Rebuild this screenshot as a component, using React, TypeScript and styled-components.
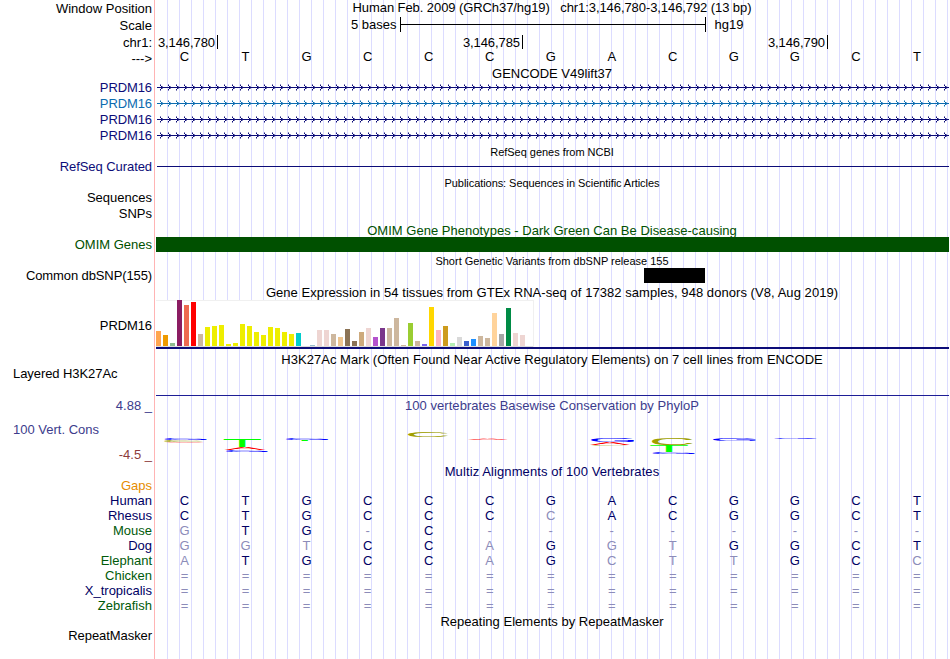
import React from "react";
import styled, { createGlobalStyle } from "styled-components";

const GlobalStyle = createGlobalStyle`
  body { margin: 0; background: #fff; }
`;

const NAVY = "#0c0c78";
const GREEN = "#005000";

const Browser = styled.main`
  width: 949px;
  height: 659px;
  overflow: hidden;
  color: #000;
  font: 13px/15px "Liberation Sans", Arial, sans-serif;
  white-space: pre;
  background:
    linear-gradient(#ffb4b4, #ffb4b4) 154px 0 / 1px 100% no-repeat,
    repeating-linear-gradient(to right, #dcdcff 0 1px, transparent 1px 12px) 167px 0 / 782px 100% no-repeat;
`;

const Row = styled.div<{ $h: number; $top?: number }>`
  display: grid;
  grid-template-columns: 155px 794px;
  height: ${(p) => p.$h}px;
  margin-top: ${(p) => p.$top ?? 0}px;
`;

const Label = styled.div<{ $color?: string; $left?: boolean; $dy?: number; $ls?: number }>`
  box-sizing: border-box;
  margin-top: ${(p) => p.$dy ?? 0}px;
  padding: 0 3px 0 13px;
  text-align: ${(p) => (p.$left ? "left" : "right")};
  color: ${(p) => p.$color ?? "#000"};
  letter-spacing: ${(p) => p.$ls ?? 0}px;
`;

const Track = styled.div`
  min-width: 0;
  padding-top: 8px;
`;

const Title = styled.div<{ $color?: string; $small?: boolean; $ls?: number }>`
  text-align: center;
  color: ${(p) => p.$color ?? "#000"};
  font-size: ${(p) => (p.$small ? 11 : 13)}px;
  letter-spacing: ${(p) => p.$ls ?? 0}px;
`;

const ScaleTrack = styled.div`
  display: flex;
  align-items: center;
  height: 15px;
  padding-left: 196px;
`;

const ScaleBar = styled.div`
  width: 304px;
  height: 15px;
  margin: 0 9px 0 3px;
  border: solid #000;
  border-width: 0 1px;
  background: linear-gradient(#000, #000) 0 7px / 100% 1px no-repeat;
`;

const Ticks = styled.div`
  display: grid;
  grid-template-columns: 63px 305px 305px;
`;

const Tick = styled.div`
  height: 14px;
  padding-right: 2px;
  border-right: 1px solid #000;
  box-sizing: border-box;
  text-align: right;
  letter-spacing: -0.08px;
`;

const Bases = styled.div`
  display: grid;
  grid-template-columns: repeat(13, 61.04px);
  margin-left: -1px;
  text-align: center;
`;

const Base = styled.span<{ $color: string }>`
  color: ${(p) => p.$color};
`;

const Block = styled.div<{ $x: number; $w: number; $h: number; $color: string; $dy?: number }>`
  width: ${(p) => p.$w}px;
  height: ${(p) => p.$h}px;
  margin: ${(p) => p.$dy ?? 0}px 0 0 ${(p) => p.$x}px;
  background: ${(p) => p.$color};
`;

const Drawing = styled.svg`
  display: block;
`;

const Expression = styled.div`
  height: 49px;
  margin-left: 1px;
  box-sizing: border-box;
  border-bottom: 2px solid ${NAVY};
`;

const Chart = styled.div`
  display: flex;
  align-items: flex-end;
  gap: 2px;
  box-sizing: border-box;
  width: 378px;
  height: 47px;
  background: #fff;
  box-shadow: inset 0 1px #f0f0f0, inset -1px 0 #f0f0f0, inset 0 -1px #dcdcdc;
  padding-bottom: 1px;
`;

const Bar = styled.div<{ $h: number; $color: string }>`
  width: 5px;
  height: ${(p) => p.$h}px;
  background: ${(p) => p.$color};
`;

const Y = "#eeee00";
const TAN = "#cdb79e";
const PINK = "#eed5d2";
const tissues: [number, string][] = [
  [15, "#ffa54f"], [11, "#ee9a00"], [3, "#8fbc8f"], [46, "#8b1c62"], [41, "#ee6a50"], [44, "#ff0000"],
  [12, TAN], [19, Y], [20, Y], [21, Y], [2, Y], [3, Y], [22, Y], [20, Y], [14, Y], [11, Y], [19, Y],
  [18, Y], [14, Y], [12, Y], [13, "#00cdcd"], [0, "#ee82ee"], [1, "#9ac0cd"], [16, PINK], [16, PINK],
  [12, TAN], [9, "#eec591"], [17, "#8b7355"], [5, "#8b7355"], [14, "#cdaa7d"], [18, PINK],
  [9, "#b452cd"], [18, "#7a378b"], [18, TAN], [28, TAN], [1, TAN], [23, "#9acd32"], [5, TAN],
  [2, "#7a67ee"], [39, "#ffd700"], [16, "#ffb6c1"], [20, "#cd9b1d"], [3, "#b4eeb4"], [9, "#d9d9d9"],
  [5, "#3a5fcd"], [7, "#1e90ff"], [10, TAN], [8, TAN], [33, "#ffd39b"], [12, "#a6a6a6"],
  [38, "#008b45"], [13, PINK], [11, PINK], [0, "#ff00ff"],
];

/* Ink box of each letter at 100 units: left bearing, width, height. */
const ink: Record<string, [number, number, number]> = {
  A: [0.5, 66, 69], C: [5, 64, 71], G: [5, 66, 71], T: [2, 56.5, 69],
};
const logoColor: Record<string, string> = { A: "#ff0000", C: "#a0a000", G: "#0000ff", T: "#00ff00" };

/* letter, x, width, top, bottom in track coordinates */
const logos: [string, number, number, number, number][] = [
  ["G", 9.5, 42.5, 1, 3], ["C", 9, 40, 3, 5], ["A", 10, 40, 4.8, 5.5],
  ["T", 68.5, 37, 2, 10], ["A", 69.5, 41, 10, 13], ["G", 71, 42, 12.8, 14.8],
  ["G", 131, 42.5, 1, 3], ["T", 131, 37, 3, 4],
  ["C", 253, 40.5, -5, 0],
  ["A", 313, 40, 1.4, 3],
  ["G", 436, 43, 1, 5], ["A", 435, 40, 5, 8], ["C", 435, 40, 8, 8.7],
  ["C", 497, 41, 1, 8.2], ["T", 495, 37.5, 8, 15], ["G", 497.5, 42.5, 15, 17],
  ["G", 558, 43, 1, 4],
  ["G", 619.5, 42.5, 1, 2],
];

const LogoPlot = () => (
  <Drawing width="794" height="30" viewBox="0 -7 794 30">
    {logos.map(([c, x, w, top, bottom], i) => {
      const [l, iw, ih] = ink[c];
      return (
        <text
          key={i}
          x={-l}
          fontSize="100"
          fontFamily="Liberation Sans, Arial, sans-serif"
          textRendering="geometricPrecision"
          fill={logoColor[c]}
          transform={`translate(${x} ${bottom}) scale(${w / iw} ${(bottom - top) / ih})`}
        >
          {c}
        </text>
      );
    })}
  </Drawing>
);

/* A gene body with strand arrows every eight pixels. */
const Gene = ({ color, id }: { color: string; id: string }) => (
  <Drawing width="794" height="16" shapeRendering="crispEdges">
    <defs>
      <pattern id={id} x="5" width="8" height="16" patternUnits="userSpaceOnUse">
        <g fill={color}>
          <rect x="2" y="7" width="1" height="1" />
          <rect x="1" y="6" width="1" height="1" />
          <rect x="1" y="8" width="1" height="1" />
          <rect x="0" y="5" width="1" height="1" />
          <rect x="0" y="9" width="1" height="1" />
        </g>
        <g fill={color} opacity=".5">
          <rect x="2" y="6" width="1" height="1" />
          <rect x="2" y="8" width="1" height="1" />
          <rect x="0" y="4" width="1" height="1" />
          <rect x="0" y="10" width="1" height="1" />
        </g>
      </pattern>
    </defs>
    <rect x="2" y="7" width="792" height="1" fill={color} />
    <rect x="2" y="0" width="792" height="16" fill={`url(#${id})`} />
  </Drawing>
);

const genes = [NAVY, "#0c6cb0", NAVY, NAVY];

const DARK = "#000064";
const LIGHT = "#8c8cb9";
const LEAF = "#005a0a";

/* Lower-case letters mark bases that differ from the human sequence. */
const species: [string, string, string][] = [
  ["Human", "CTGCCCGACGGCT", DARK],
  ["Rhesus", "CTGCCCcACGGCT", DARK],
  ["Mouse", "gTG-C--------", LEAF],
  ["Dog", "ggtCCaGgtGGCT", DARK],
  ["Elephant", "aTGCCaGcttGCc", LEAF],
  ["Chicken", "=============", LEAF],
  ["X_tropicalis", "=============", DARK],
  ["Zebrafish", "=============", LEAF],
];

const BaseRow = ({ seq, color }: { seq: string; color: string }) => (
  <Bases>
    {seq.split("").map((c, i) => (
      <Base key={i} $color={/[A-Z]/.test(c) ? color : LIGHT}>{c.toUpperCase()}</Base>
    ))}
  </Bases>
);

type TitleRowProps = { h: number; top?: number; color?: string; small?: boolean; ls?: number; text: string };
const TitleRow = ({ h, top, color, small, ls, text }: TitleRowProps) => (
  <Row $h={h} $top={top}>
    <Label />
    <Title $color={color} $small={small} $ls={ls}>{text}</Title>
  </Row>
);

export default function App() {
  return (
    <>
      <GlobalStyle />
      <Browser>
        <Row $h={17}>
          <Label $dy={1}>Window Position</Label>
          <Title $ls={-0.08}>{"Human Feb. 2009 (GRCh37/hg19)   chr1:3,146,780-3,146,792 (13 bp)"}</Title>
        </Row>
        <Row $h={18}>
          <Label $dy={1}>Scale</Label>
          <ScaleTrack>5 bases<ScaleBar />hg19</ScaleTrack>
        </Row>
        <Row $h={14}>
          <Label>chr1:</Label>
          <Ticks><Tick>3,146,780</Tick><Tick>3,146,785</Tick><Tick>3,146,790</Tick></Ticks>
        </Row>
        <Row $h={17}>
          <Label $dy={2}>---&gt;</Label>
          <BaseRow seq="CTGCCCGACGGCT" color="#000" />
        </Row>
        <TitleRow h={14} text="GENCODE V49lift37" />
        {genes.map((c, i) => (
          <Row $h={16} key={i}>
            <Label $color={c} $ls={-0.1}>PRDM16</Label>
            <Gene color={c} id={`strand${i}`} />
          </Row>
        ))}
        <TitleRow h={15} top={1} small ls={-0.03} text="RefSeq genes from NCBI" />
        <Row $h={15}>
          <Label $color={NAVY} $dy={-1} $ls={-0.07}>RefSeq Curated</Label>
          <Block $x={2} $w={792} $h={1} $dy={6} $color={NAVY} />
        </Row>
        <TitleRow h={15} top={1} small ls={-0.06} text="Publications: Sequences in Scientific Articles" />
        <Row $h={16}><Label $dy={-1}>Sequences</Label></Row>
        <Row $h={16}><Label $dy={-1}>SNPs</Label></Row>
        <TitleRow h={14} color={GREEN} ls={0.02} text="OMIM Gene Phenotypes - Dark Green Can Be Disease-causing" />
        <Row $h={15}>
          <Label $color={GREEN}>OMIM Genes</Label>
          <Block $x={1} $w={793} $h={15} $color={GREEN} />
        </Row>
        <TitleRow h={14} top={2} small text="Short Genetic Variants from dbSNP release 155" />
        <Row $h={15}>
          <Label $ls={-0.11}>Common dbSNP(155)</Label>
          <Block $x={489} $w={61} $h={15} $color="#000" />
        </Row>
        <TitleRow h={15} top={2} ls={0.055} text="Gene Expression in 54 tissues from GTEx RNA-seq of 17382 samples, 948 donors (V8, Aug 2019)" />
        <Row $h={49}>
          <Label $dy={18} $ls={-0.1}>PRDM16</Label>
          <Expression>
            <Chart>{tissues.map(([h, c], i) => <Bar key={i} $h={h} $color={c} />)}</Chart>
          </Expression>
        </Row>
        <TitleRow h={14} top={3} ls={0.047} text="H3K27Ac Mark (Often Found Near Active Regulatory Elements) on 7 cell lines from ENCODE" />
        <Row $h={32}>
          <Label $left $ls={-0.07}>Layered H3K27Ac</Label>
          <Block $x={1} $w={793} $h={1} $dy={29} $color="#1e1e96" />
        </Row>
        <Row $h={24}>
          <Label $color="#3c3c8c">4.88 _</Label>
          <Title $color="#3c3c8c" $ls={0.04}>100 vertebrates Basewise Conservation by PhyloP</Title>
        </Row>
        <Row $h={25}>
          <Label $left $color="#3c3c8c">100 Vert. Cons</Label>
          <Track><LogoPlot /></Track>
        </Row>
        <Row $h={17}><Label $color="#8c3c3c">-4.5 _</Label></Row>
        <TitleRow h={14} color={DARK} ls={0.1} text="Multiz Alignments of 100 Vertebrates" />
        <Row $h={15}><Label $color="#e68c00">Gaps</Label></Row>
        {species.map(([name, seq, color]) => (
          <Row $h={15} key={name}>
            <Label $color={color}>{name}</Label>
            <BaseRow seq={seq} color={DARK} />
          </Row>
        ))}
        <TitleRow h={15} top={1} ls={0.02} text="Repeating Elements by RepeatMasker" />
        <Row $h={15}><Label $dy={-1} $ls={-0.07}>RepeatMasker</Label></Row>
      </Browser>
    </>
  );
}
